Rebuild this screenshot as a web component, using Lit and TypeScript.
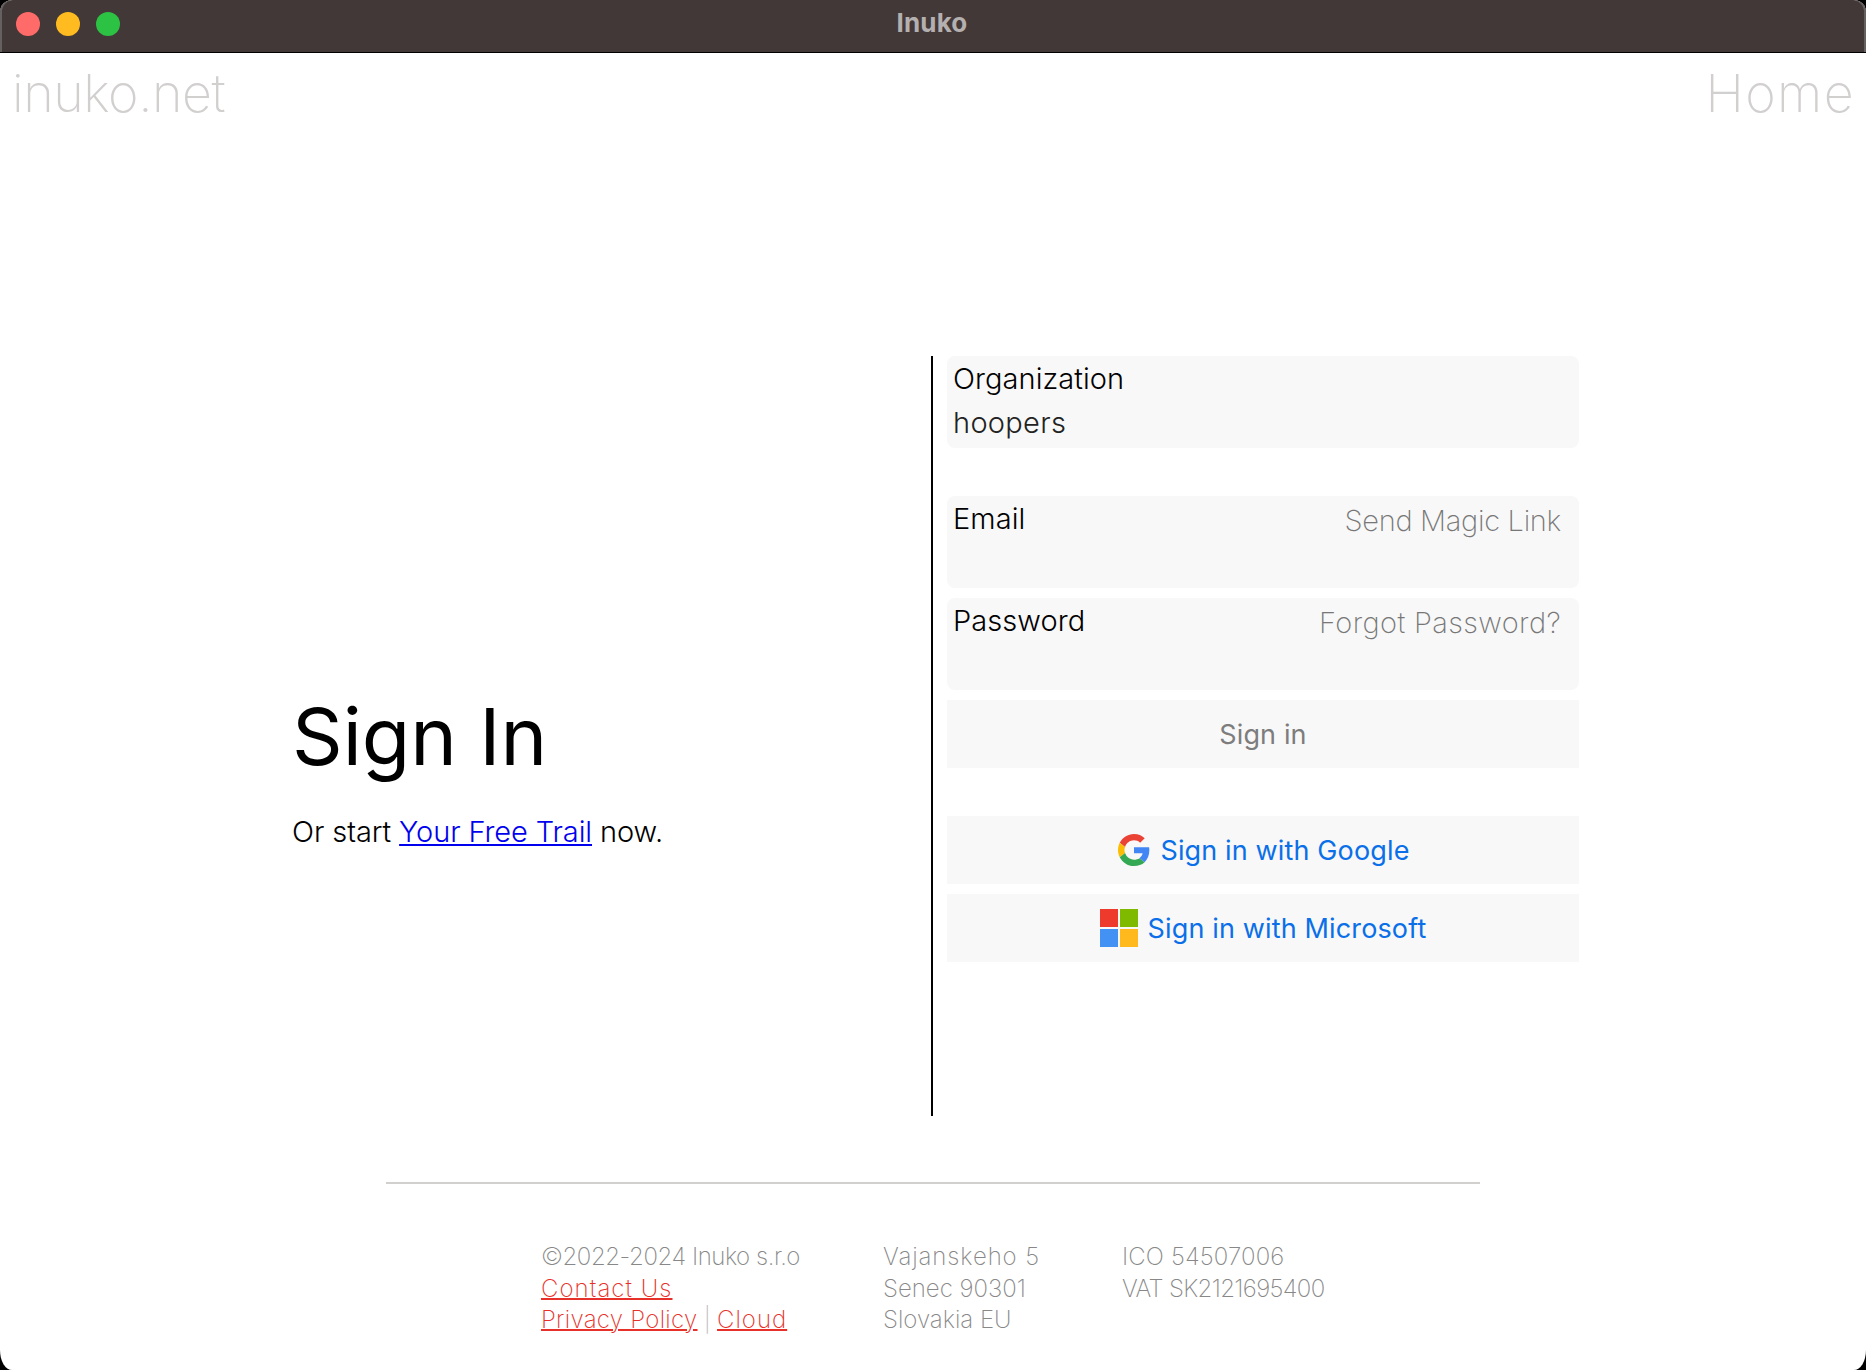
import { LitElement, html, css } from "lit";
import { customElement } from "lit/decorators.js";

@customElement("app-root")
export class AppRoot extends LitElement {
  static styles = css`
    :host { display: block; width: 1866px; height: 1370px; background: #000; font-family: Inter, "Liberation Sans", sans-serif; overflow: hidden; }
    .win { width: 1866px; height: 1370px; background: #fff; border-radius: 12px 12px 12px 12px / 12px 12px 20px 20px; overflow: hidden; display: flex; flex-direction: column; }
    .bar { height: 45px; padding-bottom: 7px; flex: none; background: #433838; border-bottom: 1px solid #000; border-radius: 12px 12px 0 0; box-shadow: inset 2px 0 0 #666161, inset -2px 0 0 #666161; display: flex; align-items: center; justify-content: center; position: relative; }
    .title { color: #b5b0b0; font-size: 26px; font-weight: 700; letter-spacing: 0.15px; margin-left: -2px; }
    .lights { position: absolute; left: 16px; top: 12px; display: flex; gap: 16px; }
    .dot { width: 24px; height: 24px; border-radius: 50%; }
    .r { background: #ff6b68; } .y { background: #ffbb1f; } .g { background: #2cc243; }
    .nav { display: flex; justify-content: space-between; padding: 11px 11px 0 12px; height: 55px; color: #d2cfcf; font-size: 52px; font-weight: 200; line-height: 60px; }
    .logo { letter-spacing: -0.45px; }
    .home { letter-spacing: 1.4px; }
    .main { height: 760px; margin-top: 237px; display: grid; grid-template-columns: 931px 2px 1fr; flex: none; }
    .left { display: flex; flex-direction: column; justify-content: center; padding: 65px 0 0 292px; }
    h1 { margin: 0; font-weight: 400; font-size: 79px; line-height: 100px; color: #000; }
    .sub { margin: 26px 0 0; font-size: 29px; font-weight: 300; line-height: 40px; color: #000; letter-spacing: -0.1px; }
    .sub a { color: #0000ee; }
    .divider { background: #000; }
    .form { padding-left: 14px; width: 632px; display: flex; flex-direction: column; }
    .field { height: 92px; background: #f8f8f8; border-radius: 8px; padding: 3px 18px 0 6px; box-sizing: border-box; margin-bottom: 10px; }
    .field.org { margin-bottom: 48px; }
    .row { display: flex; justify-content: space-between; }
    .label { font-size: 29px; font-weight: 360; line-height: 40px; color: #000; letter-spacing: 0.05px; }
    .val { font-size: 29px; font-weight: 300; line-height: 40px; color: #222; margin-top: 4px; letter-spacing: 0.3px; }
    .hint { font-size: 29px; font-weight: 200; line-height: 40px; color: #777; margin-top: 2px; }
    .magic { letter-spacing: -0.3px; }
    .forgot { letter-spacing: 0.37px; }
    .btn { height: 68px; background: #f8f8f8; display: flex; align-items: center; justify-content: center; font-size: 27px; margin-bottom: 10px; color: #0a6fe8; gap: 10px; letter-spacing: 0.14px; }
    .btn.plain { color: #7d7d7d; margin-bottom: 48px; }
    .btn svg { flex: none; }
    .g-icon { margin-left: 2px; }
    hr { border: 0; height: 2px; background: #d2cfcf; width: 1094px; margin: 66px auto 0; flex: none; }
    .foot { display: flex; padding: 57px 0 0 541px; font-size: 24px; font-weight: 200; line-height: 31.5px; color: #888; }
    .c1 { width: 342px; } .c2 { width: 239px; }
    .foot a { color: #e8302a; text-decoration-thickness: 2px; }
    .copy { letter-spacing: -0.45px; }
    .contact { letter-spacing: 1.05px; }
    .privacy { letter-spacing: 0.3px; }
    .cloud { letter-spacing: 1px; }
    .sep { word-spacing: -0.5px; color: #bbb; }
    .addr { letter-spacing: 0.9px; }
    .ico { letter-spacing: 0.15px; }
    .vat { letter-spacing: -0.65px; }
  `;

  render() {
    return html`<div class="win">
      <div class="bar">
        <div class="lights"><div class="dot r"></div><div class="dot y"></div><div class="dot g"></div></div>
        <div class="title">Inuko</div>
      </div>
      <div class="nav"><span class="logo">inuko.net</span><span class="home">Home</span></div>
      <div class="main">
        <div class="left">
          <h1>Sign In</h1>
          <p class="sub">Or start <a href="#">Your Free Trail</a> now.</p>
        </div>
        <div class="divider"></div>
        <div class="form">
          <div class="field org"><div class="label">Organization</div><div class="val">hoopers</div></div>
          <div class="field"><div class="row"><span class="label">Email</span><span class="hint magic">Send Magic Link</span></div></div>
          <div class="field"><div class="row"><span class="label">Password</span><span class="hint forgot">Forgot Password?</span></div></div>
          <div class="btn plain">Sign in</div>
          <div class="btn">
            <svg class="g-icon" width="32" height="32" viewBox="0 0 48 48"><path fill="#EA4335" d="M24 9.5c3.500 0 6.700 1.200 9.200 3.600l6.900-6.900C35.900 2.400 30.500 0 24 0 14.600 0 6.500 5.400 2.600 13.200l8 6.200C12.500 13.700 17.800 9.500 24 9.500z"/><path fill="#4285F4" d="M47 24.500c0-1.600-.1-3.100-.4-4.500H24v9h12.900c-.6 3-2.200 5.500-4.700 7.200l7.700 6C44.400 38 47 31.800 47 24.500z"/><path fill="#FBBC05" d="M10.500 28.600c-.5-1.500-.8-3-.8-4.600s.3-3.100.8-4.600l-8-6.200C.9 16.500 0 20.100 0 24s.9 7.500 2.600 10.800l7.900-6.200z"/><path fill="#34A853" d="M24 48c6.500 0 11.900-2.100 15.900-5.800l-7.700-6c-2.200 1.400-4.900 2.300-8.200 2.300-6.200 0-11.500-4.200-13.400-9.900l-8 6.200C6.500 42.600 14.600 48 24 48z"/></svg>
            Sign in with Google
          </div>
          <div class="btn">
            <svg width="38" height="38" viewBox="0 0 38 38"><rect width="18" height="18" fill="#ee3a2c"/><rect x="20" width="18" height="18" fill="#7fb900"/><rect y="20" width="18" height="18" fill="#4391f2"/><rect x="20" y="20" width="18" height="18" fill="#ffb91c"/></svg>
            Sign in with Microsoft
          </div>
        </div>
      </div>
      <hr />
      <div class="foot">
        <div class="c1"><span class="copy">©2022-2024 Inuko s.r.o</span><br /><a class="contact" href="#">Contact Us</a><br /><a class="privacy" href="#">Privacy Policy</a><span class="sep"> | </span><a class="cloud" href="#">Cloud</a></div>
        <div class="c2"><span class="addr">Vajanskeho 5</span><br />Senec 90301<br />Slovakia EU</div>
        <div><span class="ico">ICO 54507006</span><br /><span class="vat">VAT SK2121695400</span></div>
      </div>
    </div>`;
  }
}
